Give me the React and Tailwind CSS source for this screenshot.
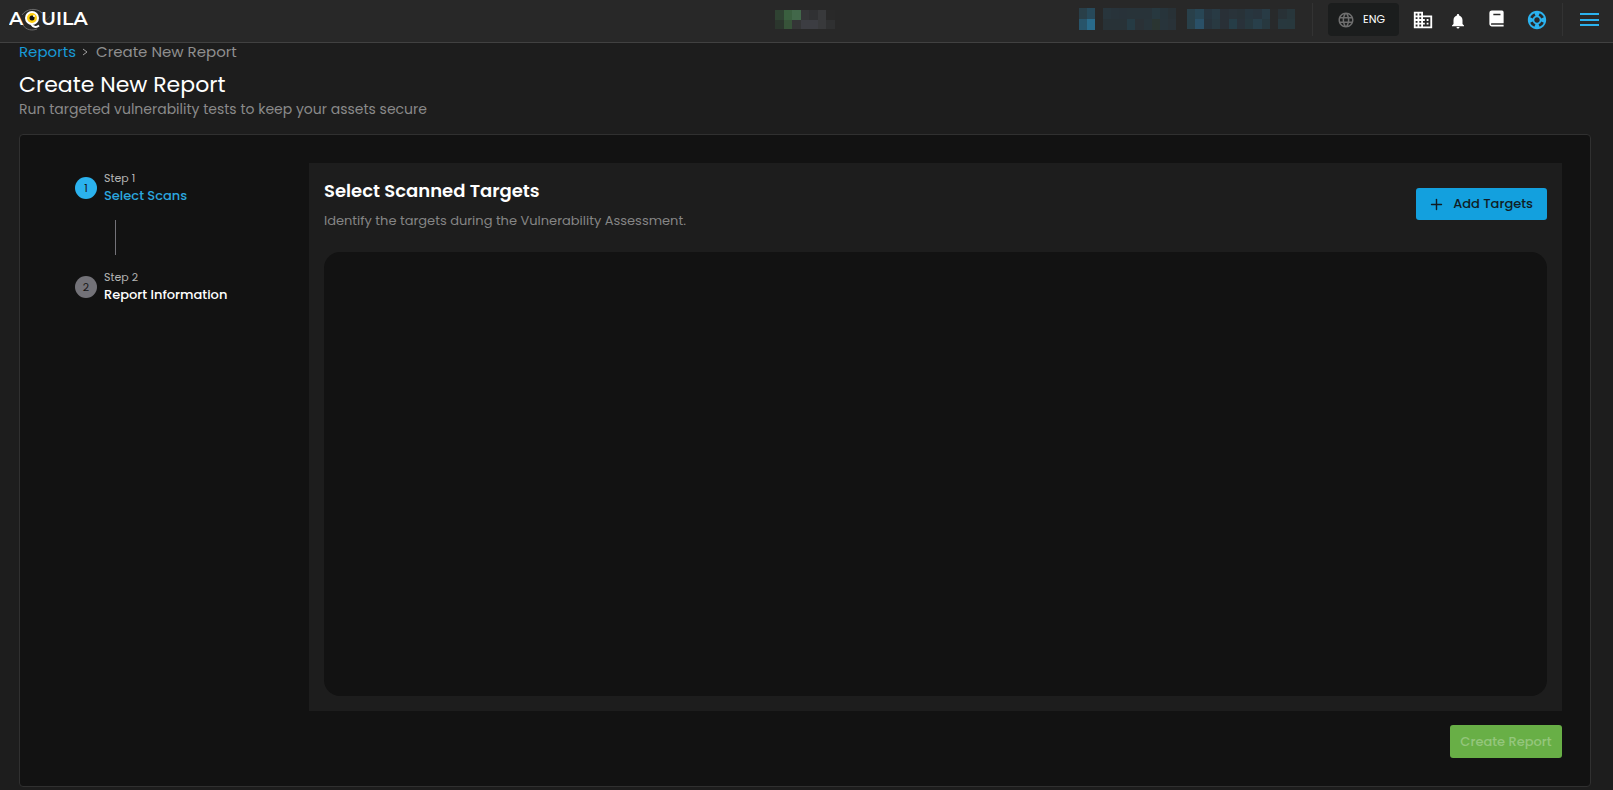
import { BiSolidBook } from "react-icons/bi";
import { MdBusiness, MdLanguage, MdNotifications, MdSupport } from "react-icons/md";
import { Plus } from "lucide-react";

const statusCells = [
  "#2f4232", "#3a5f3f", "#42684a", "#343537", "#303133", "#38393b", "#292929",
  "#2b362d", "#375339", "#343536", "#3c3d42", "#3c3d42", "#38393b", "#2f3031",
];

const avatarCells = ["#293f49", "#27495a", "#28546a", "#296a8a"];

const nameCells = [
  "#28353c", "#28333a", "#283239", "#283339", "#283339", "#283339", "#27383f", "#27343b", "#283136",
  "#283237", "#283237", "#283237", "#263b44", "#2a3136", "#28343a", "#2a3532", "#28343b", "#293238",
];

const accountCells = [
  "#29404a", "#284655", "#27353f", "#283a44", "#293037", "#29333a", "#283238", "#27363f", "#28343d", "#283b45", "#282a2b", "#283136", "#28363b",
  "#294049", "#2a5067", "#27333c", "#283941", "#293037", "#263d47", "#29323a", "#27383f", "#283f4a", "#27383f", "#282a2b", "#28383e", "#28383d",
];

function Mosaic({ cells, className }) {
  return (
    <div aria-hidden="true" className={`grid grid-rows-2 ${className}`}>
      {cells.map((color, i) => (
        <span key={i} style={{ backgroundColor: color }}></span>
      ))}
    </div>
  );
}

function Logo() {
  return (
    <svg width="82" height="26" viewBox="0 0 82 26" role="img" aria-label="Aquila">
      <g fill="none" stroke="#6b6b6b" strokeWidth="1">
        <path d="M13 8C17 2 27 0 33 6" />
        <path d="M14 18c3 5 9 6 14 4" />
        <path d="M35 14c3-1 5-3 6-5" stroke="#4a4a4a" />
      </g>
      <g
        fill="#ffffff"
        fontFamily="Montserrat, Inter, sans-serif"
        fontSize="19"
        fontWeight="600"
      >
        <text x="0" y="18">A</text>
        <text x="32" y="18">UILA</text>
      </g>
      <path d="M22 17c2 3 5 4 8 1.500" fill="none" stroke="#ffffff" strokeWidth="2" />
      <circle cx="23" cy="11" r="6" fill="#ffcf10" stroke="#ffffff" strokeWidth="2" />
      <circle cx="23" cy="11" r="2.500" fill="#111111" />
      <circle cx="25" cy="9" r="1" fill="#ffffff" />
    </svg>
  );
}

function Header() {
  return (
    <header className="flex h-[43px] shrink-0 items-center justify-between border-b border-[#414141] bg-[#282828] pb-[3px] pl-[9px] pr-3.5">
      <a href="#">
        <Logo />
      </a>
      <Mosaic cells={statusCells} className="ml-[684px] h-[19px] w-[60px] grid-cols-7" />
      <div className="ml-auto flex items-center">
        <Mosaic cells={avatarCells} className="mb-px h-[22px] w-4 grid-cols-2" />
        <Mosaic cells={nameCells} className="mb-px ml-2 h-[22px] w-[73px] grid-cols-9" />
        <Mosaic cells={accountCells} className="mb-px ml-[11px] h-5 w-[108px] grid-cols-13" />
        <div className="ml-[17px] h-[33px] w-px bg-[#333333]"></div>
        <button className="ml-[15px] flex h-[33px] w-[71px] items-center gap-2 rounded bg-[#1b1d1d] pl-[9px] text-[11px] text-white">
          <MdLanguage className="size-[18px] text-[#6e6e6e]" />
          ENG
        </button>
        <button aria-label="Organization" className="ml-[13px] text-white">
          <MdBusiness className="size-[22px]" />
        </button>
        <button aria-label="Notifications" className="ml-[15px] pt-[3px] text-white">
          <MdNotifications className="size-[18px]" />
        </button>
        <button aria-label="Documentation" className="ml-5 pb-0.5 text-white">
          <BiSolidBook className="size-[19px]" />
        </button>
        <button aria-label="Support" className="ml-5 pt-px text-[#2bb2ee]">
          <MdSupport className="size-[22px]" />
        </button>
        <div className="ml-3.5 h-[33px] w-px bg-[#333333]"></div>
        <button aria-label="Menu" className="ml-[17px] flex h-[13px] w-[19px] flex-col justify-between">
          <span className="h-0.5 bg-[#2bb2ee]"></span>
          <span className="h-0.5 bg-[#2bb2ee]"></span>
          <span className="h-0.5 bg-[#2bb2ee]"></span>
        </button>
      </div>
    </header>
  );
}

function Step({ number, title, active }) {
  return (
    <li className="flex items-start gap-[7px]">
      <span
        className={`mt-2 flex size-[22px] items-center justify-center rounded-full text-[11px] text-[#151515] ${
          active ? "bg-[#2bb2ee]" : "bg-[#737278]"
        }`}
      >
        {number}
      </span>
      <div>
        <p className="text-[11px] leading-[18px] text-[#b5b5b5]">Step {number}</p>
        <p
          className={`text-[13px] leading-[18px] font-medium ${
            active ? "text-[#2ba6df]" : "text-white"
          }`}
        >
          {title}
        </p>
      </div>
    </li>
  );
}

export default function App() {
  return (
    <div className="flex min-h-screen flex-col bg-[#1d1d1d] font-[Poppins,Inter,sans-serif]">
      <Header />
      <main className="flex flex-1 flex-col pr-[22px] pb-[3px] pl-[19px]">
        <nav aria-label="Breadcrumb" className="flex h-[18px] items-center text-[15px] leading-[18px] text-[#8f8f8f]">
          <a href="#" className="text-[#1899d6]">
            Reports
          </a>
          <svg aria-hidden="true" width="6" height="8" viewBox="0 0 6 8" className="mr-2 ml-1.5 fill-none stroke-[#a0a0a0]">
            <path d="M1 1l4 3-4 3" />
          </svg>
          <span>Create New Report</span>
        </nav>
        <h1 className="mt-2 text-[22px] leading-8 text-white">Create New Report</h1>
        <p className="text-sm leading-4 text-[#8a8a8a]">
          Run targeted vulnerability tests to keep your assets secure
        </p>

        <div className="mt-[17px] flex flex-1 rounded border border-[#303030] bg-[#121212] pt-7 pr-7 pb-7 pl-[55px]">
          <ol className="w-[234px] shrink-0 pt-1.5">
            <Step number={1} title="Select Scans" active />
            <li aria-hidden="true" className="mt-[15px] mb-[13px] ml-10 h-[35px] w-px bg-[#737278]"></li>
            <Step number={2} title="Report Information" />
          </ol>

          <div className="flex flex-1 flex-col">
            <section className="flex flex-1 flex-col bg-[#1d1d1d] px-[15px] pb-[15px]">
              <div className="flex h-[89px] items-center justify-between">
                <div>
                  <h2 className="text-lg leading-6 font-semibold text-white">Select Scanned Targets</h2>
                  <p className="mt-2 mb-1.5 text-[13px] leading-5 text-[#858585]">
                    Identify the targets during the Vulnerability Assessment.
                  </p>
                </div>
                <button className="mt-[-7px] flex h-8 items-center gap-2 rounded-[3px] bg-[#13a0de] pr-3.5 pl-3 text-[13px] font-medium text-[#101c24]">
                  <Plus size={17} strokeWidth={2} />
                  Add Targets
                </button>
              </div>
              <div className="flex-1 rounded-2xl bg-[#121212]"></div>
            </section>
            <button
              disabled
              className="mt-3.5 h-[33px] w-28 self-end rounded-[3px] bg-[#68af46] text-[13px] font-medium text-[#94c67c]"
            >
              Create Report
            </button>
          </div>
        </div>
      </main>
    </div>
  );
}
